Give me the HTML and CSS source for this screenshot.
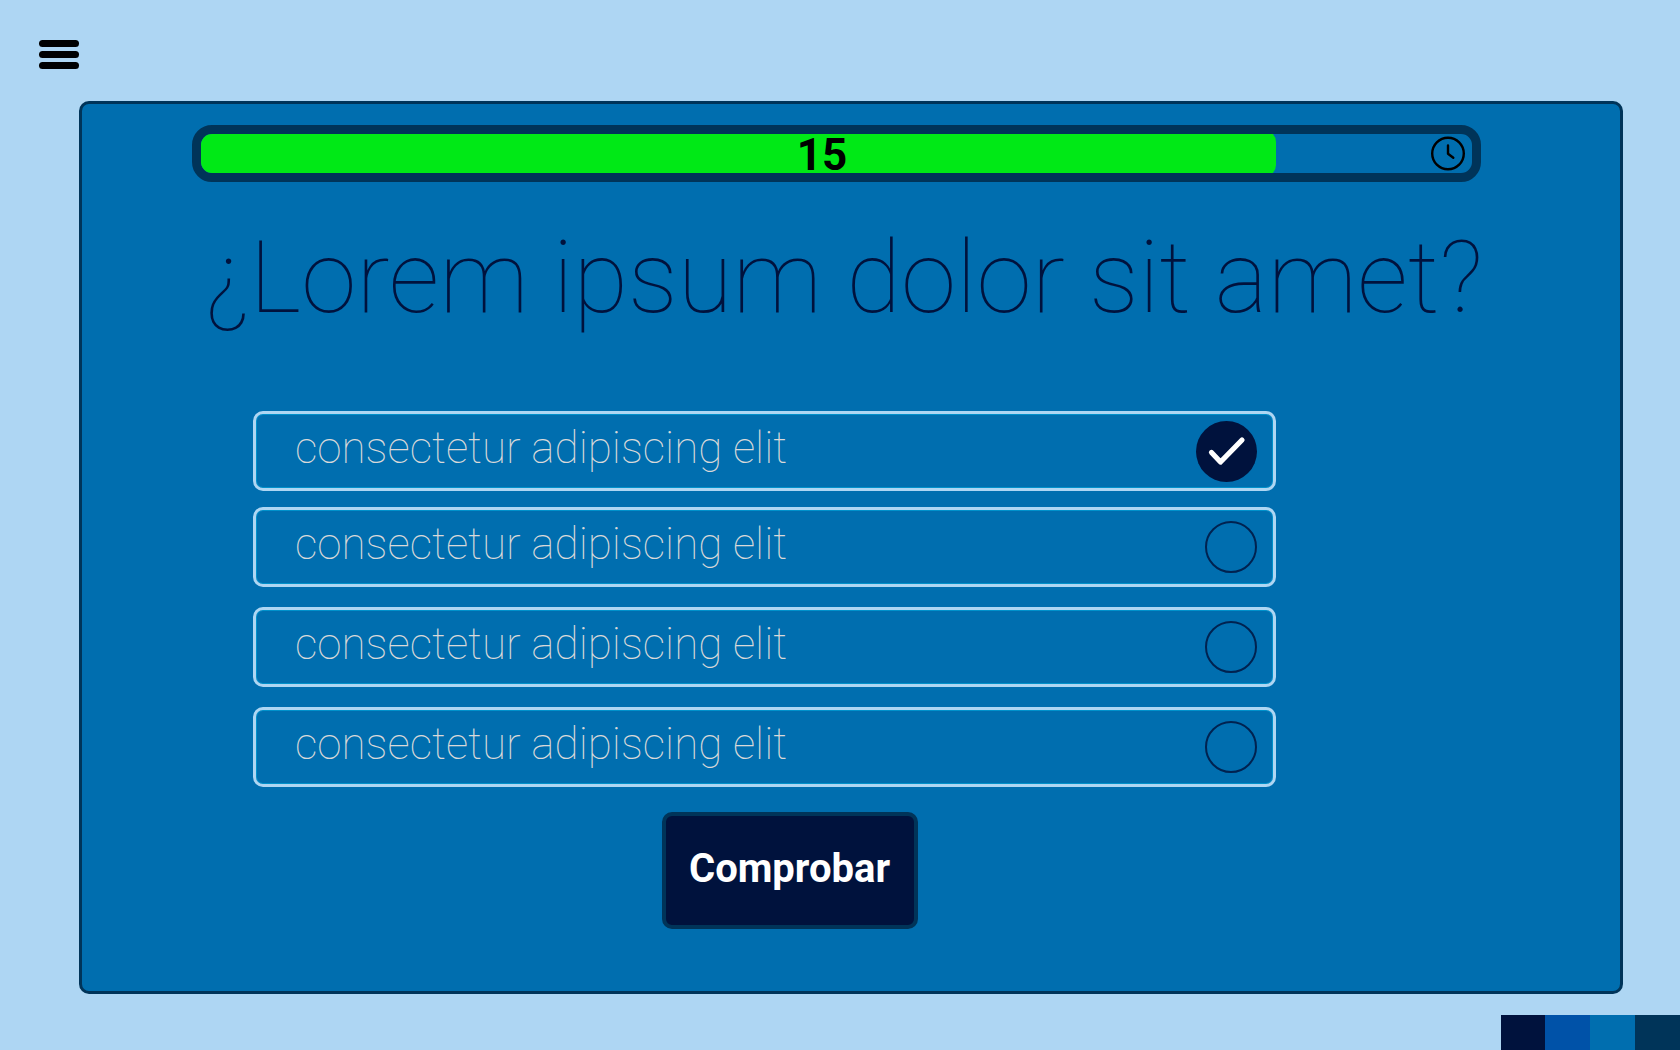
FILE: index.html
```html
<!DOCTYPE html>
<html lang="es">
<head>
<meta charset="utf-8">
<meta name="viewport" content="width=device-width, initial-scale=1">
<title>Quiz</title>
<link rel="stylesheet" href="styles.css">
</head>
<body>
<header class="topbar">
  <button class="menu" type="button" aria-label="Menú">
    <span class="menu-line"></span>
    <span class="menu-line"></span>
    <span class="menu-line"></span>
  </button>
</header>
<main class="card">
  <div class="timer" role="progressbar" aria-label="Tiempo restante" aria-valuenow="15" aria-valuemin="0" aria-valuemax="18">
    <div class="timer-fill" style="width: 84.6%"></div>
    <span class="timer-value">15</span>
    <svg class="timer-clock" viewBox="0 0 34 34" aria-hidden="true">
      <circle cx="17" cy="16.5" r="15.8"/>
      <path d="M17 8.500v8.300l5.300 4"/>
    </svg>
  </div>
  <h1 class="question">¿Lorem ipsum dolor sit amet?</h1>
  <form class="answers">
    <label class="option"><span class="option-text">consectetur adipiscing elit</span><input class="option-radio" type="radio" name="answer" checked></label>
    <label class="option"><span class="option-text">consectetur adipiscing elit</span><input class="option-radio" type="radio" name="answer"></label>
    <label class="option"><span class="option-text">consectetur adipiscing elit</span><input class="option-radio" type="radio" name="answer"></label>
    <label class="option"><span class="option-text">consectetur adipiscing elit</span><input class="option-radio" type="radio" name="answer"></label>
    <button class="submit" type="button">Comprobar</button>
  </form>
</main>
<footer class="palette">
  <span class="swatch swatch-ink"></span>
  <span class="swatch swatch-royal"></span>
  <span class="swatch swatch-blue"></span>
  <span class="swatch swatch-navy"></span>
</footer>
</body>
</html>
```
FILE: styles.css
```css
:root {
  --sky: #aed6f3;
  --blue: #006eaf;
  --navy: #003459;
  --ink: #00123d;
  --royal: #0052a8;
}

* {
  box-sizing: border-box;
}

body {
  margin: 0;
  min-height: 100vh;
  display: flex;
  flex-direction: column;
  background: var(--sky);
  font-family: Roboto, sans-serif;
}

.topbar {
  padding: 40px 39px 32px;
}

.menu {
  display: flex;
  flex-direction: column;
  gap: 4px;
  width: 40px;
  padding: 0;
  border: 0;
  background: none;
}

.menu-line {
  height: 7px;
  border-radius: 4px;
  background: #000;
}

.card {
  flex: 1;
  display: flex;
  flex-direction: column;
  margin: 0 57px 21px 79px;
  padding: 21px 0 40px;
  border: 3px solid var(--navy);
  border-radius: 10px;
  background: var(--blue);
}

.timer {
  position: relative;
  display: flex;
  align-items: center;
  height: 57px;
  margin: 0 139px 0 110px;
  padding-right: 7px;
  overflow: hidden;
  border: 9px solid var(--navy);
  border-radius: 20px;
}

.timer-fill {
  position: absolute;
  inset: -4px auto -4px 0;
  border-radius: 0 12px 12px 0;
  background: #00e916;
}

.timer-value {
  position: relative;
  flex: 1;
  padding: 2px 0 0 12px;
  font-size: 44px;
  line-height: 40px;
  font-weight: 700;
  text-align: center;
}

.timer-clock {
  width: 34px;
  height: 34px;
  fill: none;
  stroke: #000;
  stroke-width: 2.4;
  stroke-linecap: round;
  stroke-linejoin: round;
  overflow: visible;
}

.question {
  margin: 37px 124px 0 110px;
  color: var(--ink);
  font-size: 100px;
  line-height: 117px;
  font-weight: 100;
  text-align: center;
}

.answers {
  display: flex;
  flex-direction: column;
  gap: 20px;
  margin: 75px 344px 0 171px;
}

.option {
  display: flex;
  align-items: center;
  justify-content: space-between;
  height: 80px;
  padding: 0 16px 0 39px;
  border: 3px solid var(--sky);
  border-radius: 10px;
  box-shadow: inset 0 0 0 1px #0091cb;
}

.option:first-child {
  margin-bottom: -4px;
}

.option-text {
  padding-bottom: 6px;
  color: #d9d9d9;
  font-size: 44px;
  line-height: 52px;
  font-weight: 100;
}

.option-radio {
  appearance: none;
  width: 52px;
  height: 52px;
  margin: 0;
  border: 2px solid #002250;
  border-radius: 50%;
}

.option-radio:checked {
  width: 61px;
  height: 61px;
  border: 0;
  background: var(--ink) url("data:image/svg+xml,%3Csvg xmlns='http://www.w3.org/2000/svg' viewBox='0 0 61 61'%3E%3Cpath d='M15.500 31.500l9 9.500 21.500-22' fill='none' stroke='white' stroke-width='5.200' stroke-linecap='round' stroke-linejoin='round'/%3E%3C/svg%3E") center / contain no-repeat;
}

.submit {
  align-self: center;
  width: 256px;
  height: 117px;
  margin: 5px 0 0 51px;
  padding: 0 1px 4px 0;
  border: 4px solid var(--navy);
  border-radius: 10px;
  background: var(--ink);
  color: #fff;
  font-family: inherit;
  font-size: 40px;
  font-weight: 700;
}

.palette {
  display: flex;
  justify-content: flex-end;
}

.swatch {
  width: 45px;
  height: 35px;
}

.swatch-ink {
  width: 44px;
  background: var(--ink);
}

.swatch-royal {
  background: var(--royal);
}

.swatch-blue {
  background: var(--blue);
}

.swatch-navy {
  background: var(--navy);
}
```
